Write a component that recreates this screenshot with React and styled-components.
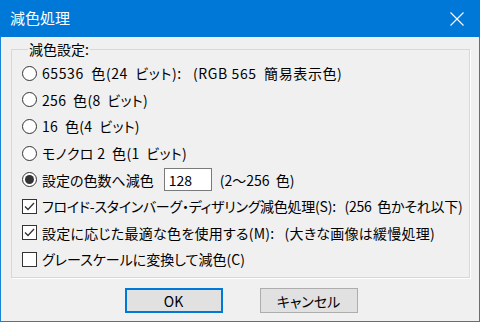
import React from "react";
import styled, { createGlobalStyle } from "styled-components";

const Global = createGlobalStyle`
  html, body { margin: 0; padding: 0; background: #f0f0f0; }
  body { font-family: "Noto Sans CJK JP", "Noto Sans", sans-serif; color: #000; }
`;

const Window = styled.div`
  width: 480px;
  height: 322px;
  box-sizing: border-box;
  border: 1px solid #1883d7;
  border-top: none;
  background: #f0f0f0;
  display: flex;
  flex-direction: column;
`;

const TitleBar = styled.div`
  height: 37px;
  margin: 0 -1px;
  background: #0078d7;
  display: flex;
  align-items: center;
  justify-content: space-between;
  padding: 0 16px 0 10px;
  color: #fff;
  font-size: 15px;
  flex-shrink: 0;
`;

const Title = styled.span`
  line-height: 20px;
  margin-top: -1px;
`;

const Body = styled.div`
  flex: 1;
  display: flex;
  flex-direction: column;
  padding: 2px 9px 0 10px;
`;

const Group = styled.fieldset`
  margin: 0;
  padding: 1px 0 3px 10px;
  border: 1px solid #d8d8d8;
  box-shadow: 1px 1px 0 #fff;
  height: 239px;
  box-sizing: border-box;
  display: flex;
  flex-direction: column;
`;

const Legend = styled.legend`
  font-size: 14px;
  line-height: 20px;
  padding: 0 1px;
  margin-left: 6px;
`;

const Row = styled.div`
  height: 26.6px;
  display: flex;
  align-items: center;
  font-size: 14px;
  white-space: pre;
  font-feature-settings: "palt";
  letter-spacing: ${(p) => p.$spacing || 0}px;
`;

const RadioMark = styled.span`
  width: 15px;
  height: 15px;
  box-sizing: border-box;
  border: 1px solid #333;
  border-radius: 50%;
  background: #fff;
  margin-right: 5px;
  flex-shrink: 0;
  display: flex;
  align-items: center;
  justify-content: center;
  &::after {
    content: "";
    display: ${(p) => (p.$checked ? "block" : "none")};
    width: 9px;
    height: 9px;
    border-radius: 50%;
    background: #333;
  }
`;

const CheckMark = styled.span`
  width: 15px;
  height: 15px;
  box-sizing: border-box;
  border: 1px solid #333;
  background: #fff;
  margin-right: 5px;
  flex-shrink: 0;
  display: flex;
  align-items: center;
  justify-content: center;
`;

const NumBox = styled.span`
  width: 48px;
  height: 23px;
  box-sizing: border-box;
  border: 1px solid #7a7a7a;
  background: #fff;
  margin: 0 8px 0 10px;
  padding: 0 4px;
  display: flex;
  align-items: center;
  font-size: 14px;
`;

const ButtonBar = styled.div`
  display: flex;
  justify-content: center;
  gap: 37px;
  margin-top: 10px;
  padding-left: 1px;
`;

const Button = styled.div`
  width: 98px;
  height: 25px;
  box-sizing: border-box;
  background: #e1e1e1;
  border: ${(p) => (p.$primary ? "2px solid #0078d7" : "1px solid #adadad")};
  display: flex;
  align-items: center;
  justify-content: center;
  font-size: 14px;
  font-feature-settings: "palt";
`;

const Radio = ({ checked, spacing, children }) => (
  <Row $spacing={spacing}>
    <RadioMark $checked={checked} />
    {children}
  </Row>
);

const Check = ({ checked, spacing, children }) => (
  <Row $spacing={spacing}>
    <CheckMark>
      {checked && (
        <svg width="11" height="9" viewBox="0 0 11 9">
          <path d="M1 4.5 L4 7.5 L10 1" fill="none" stroke="#333" strokeWidth="1.3" />
        </svg>
      )}
    </CheckMark>
    {children}
  </Row>
);

export default function App() {
  return (
    <>
      <Global />
      <Window>
        <TitleBar>
          <Title>減色処理</Title>
          <svg width="14" height="14" viewBox="0 0 14 14">
            <path d="M0.5 0.5 L13.5 13.5 M13.5 0.5 L0.5 13.5" stroke="#fff" strokeWidth="1.1" />
          </svg>
        </TitleBar>
        <Body>
          <Group>
            <Legend>減色設定:</Legend>
            <Radio spacing={0.6}>65536  色(24  ビット):   (RGB 565  簡易表示色)</Radio>
            <Radio spacing={0.3}>256  色(8  ビット)</Radio>
            <Radio spacing={0.3}>16  色(4  ビット)</Radio>
            <Radio spacing={0.3}>モノクロ 2  色(1  ビット)</Radio>
            <Radio checked>
              設定の色数へ減色<NumBox>128</NumBox>(2〜256  色)
            </Radio>
            <Check checked spacing={-0.25}>フロイド-スタインバーグ・ディザリング減色処理(S):   (256  色かそれ以下)</Check>
            <Check checked spacing={0.25}>設定に応じた最適な色を使用する(M):   (大きな画像は緩慢処理)</Check>
            <Check>グレースケールに変換して減色(C)</Check>
          </Group>
          <ButtonBar>
            <Button $primary>OK</Button>
            <Button>キャンセル</Button>
          </ButtonBar>
        </Body>
      </Window>
    </>
  );
}
